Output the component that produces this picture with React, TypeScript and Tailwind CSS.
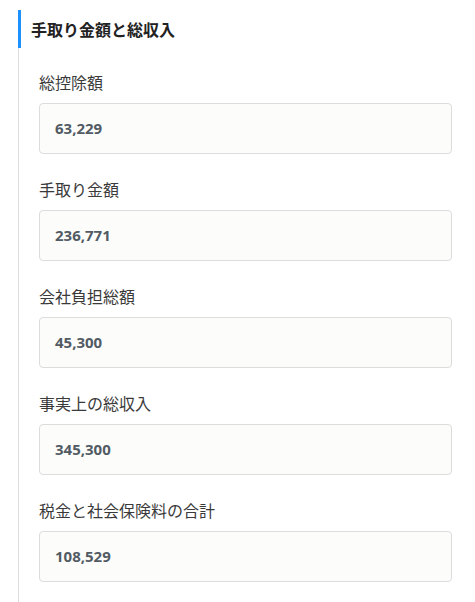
import React from "react";

const items = [
  { label: "総控除額", value: "63,229" },
  { label: "手取り金額", value: "236,771" },
  { label: "会社負担総額", value: "45,300" },
  { label: "事実上の総収入", value: "345,300" },
  { label: "税金と社会保険料の合計", value: "108,529" },
];

export default function App() {
  return (
    <div
      className="min-h-[602px] w-[475px] bg-white pt-[10px] pl-[18px] pr-[23px]"
      style={{ fontFamily: '"Noto Sans CJK JP", "Noto Sans", sans-serif' }}
    >
      <div className="flex h-[38px] items-center border-l-[3px] border-[#1e90ff] pl-[10px] text-[16px] font-bold text-[#222]">
        手取り金額と総収入
      </div>
      <div className="flex flex-col gap-[23px] border-l border-[#dddddd] pt-[22px] pb-[24px] pl-[20px]">
        {items.map((it) => (
          <div key={it.label} className="flex flex-col gap-[9px]">
            <div className="h-[24px] text-[16px] leading-[24px] text-[#3a3a3a]">{it.label}</div>
            <div className="flex h-[51px] items-center rounded-[4px] border border-[#dcdcdc] bg-[#fcfdfb] pl-[15px]">
              <span
                className="-mt-[1px] text-[15px] font-bold text-[#525b63]"
                style={{ fontFamily: '"Noto Sans", sans-serif' }}
              >
                {it.value}
              </span>
            </div>
          </div>
        ))}
      </div>
    </div>
  );
}
